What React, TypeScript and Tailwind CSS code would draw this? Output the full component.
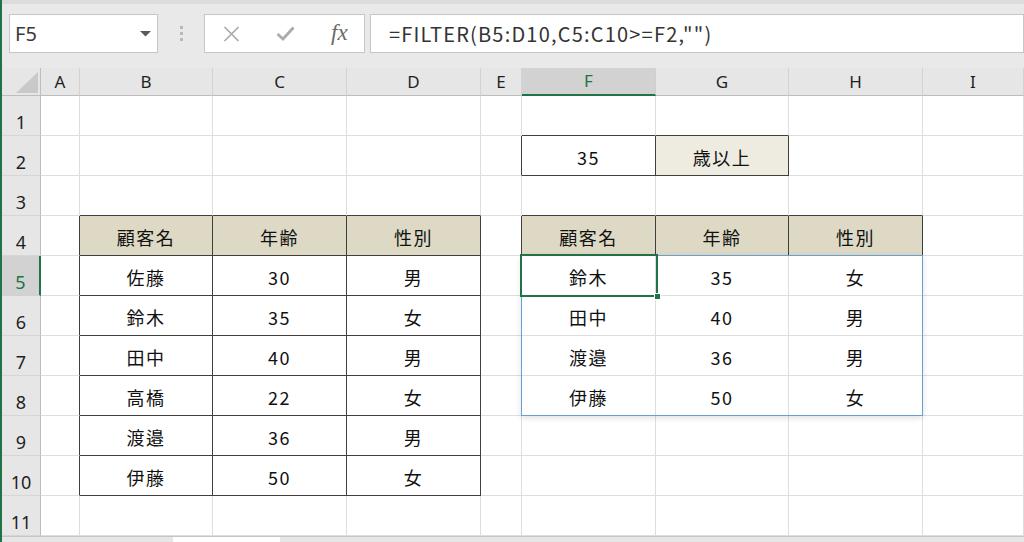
import React from 'react';

const COLS = ['A', 'B', 'C', 'D', 'E', 'F', 'G', 'H', 'I'];
const ROWS = [1, 2, 3, 4, 5, 6, 7, 8, 9, 10, 11];

const HEAD = 'bg-[#ddd9c4]';
const SOFT = 'bg-[#eeece1]';

type Cell = { text: string; fill?: string };

const CELLS: Record<string, Cell> = {
  F2: { text: '35' },
  G2: { text: '歳以上', fill: SOFT },
  B4: { text: '顧客名', fill: HEAD },
  C4: { text: '年齢', fill: HEAD },
  D4: { text: '性別', fill: HEAD },
  F4: { text: '顧客名', fill: HEAD },
  G4: { text: '年齢', fill: HEAD },
  H4: { text: '性別', fill: HEAD },
};

const SOURCE = [
  ['佐藤', '30', '男'],
  ['鈴木', '35', '女'],
  ['田中', '40', '男'],
  ['高橋', '22', '女'],
  ['渡邉', '36', '男'],
  ['伊藤', '50', '女'],
];
SOURCE.forEach((r, i) => {
  CELLS[`B${i + 5}`] = { text: r[0] };
  CELLS[`C${i + 5}`] = { text: r[1] };
  CELLS[`D${i + 5}`] = { text: r[2] };
});
SOURCE.filter((r) => Number(r[1]) >= 35).forEach((r, i) => {
  CELLS[`F${i + 5}`] = { text: r[0] };
  CELLS[`G${i + 5}`] = { text: r[1] };
  CELLS[`H${i + 5}`] = { text: r[2] };
});

// ranges with thin dark borders: B4:D10, F2:G2, F4:H4
function boxed(r: number, c: number) {
  if (r >= 4 && r <= 10 && c >= 1 && c <= 3) return true;
  if (r === 2 && (c === 5 || c === 6)) return true;
  if (r === 4 && c >= 5 && c <= 7) return true;
  return false;
}

const CELL_FONT = "font-['Noto_Sans_CJK_JP','Noto_Sans',sans-serif]";
const UI_FONT = "font-['Noto_Sans','Liberation_Sans',sans-serif]";

function Toolbar() {
  return (
    <div className="h-[68px] bg-[#e9e9e9] border-t-4 border-[#dcdcdc] flex items-start pt-[10px] pl-[7px]">
      <div className="w-[149px] h-[39px] bg-white border border-[#c6c6c6] flex items-center justify-between pl-[5px] pr-[6px]">
        <span className={`${UI_FONT} text-[20px] text-[#3a3a3a]`}>F5</span>
        <svg width="11" height="6" viewBox="0 0 11 6">
          <path d="M0 0 H11 L5.5 5.5 Z" fill="#5a5a5a" />
        </svg>
      </div>
      <div className="w-[46px] h-[39px] flex flex-col items-center justify-center gap-[3px]">
        <span className="w-[3px] h-[3px] bg-[#b9b9b9]" />
        <span className="w-[3px] h-[3px] bg-[#b9b9b9]" />
        <span className="w-[3px] h-[3px] bg-[#b9b9b9]" />
      </div>
      <div className="w-[161px] h-[39px] bg-white border border-[#c6c6c6] flex items-center pl-[18px] gap-[36px]">
        <svg width="17" height="16" viewBox="0 0 17 16">
          <path d="M1.5 1 L15.5 15 M15.5 1 L1.5 15" stroke="#ababab" strokeWidth="1.7" />
        </svg>
        <svg width="19" height="15" viewBox="0 0 19 15">
          <path d="M1.5 8 L7 13 L17.5 1.5" stroke="#ababab" strokeWidth="2.8" fill="none" />
        </svg>
        <span className="font-['Liberation_Serif',serif] italic text-[23px] text-[#6a6a6a] leading-none -mt-[3px]">
          fx
        </span>
      </div>
      <div className="flex-1 h-[39px] bg-white border border-[#c6c6c6] ml-[5px] flex items-center pl-[18px]">
        <span className={`${CELL_FONT} text-[20px] text-[#333] tracking-[1.2px]`}>
          =FILTER(B5:D10,C5:C10&gt;=F2,"")
        </span>
      </div>
    </div>
  );
}

function Sheet() {
  return (
    <div className="relative grid grid-cols-[39px_39px_133px_134px_134px_41px_134px_133px_134px_1fr] grid-rows-[28px_repeat(11,40px)] bg-white">
      {/* corner */}
      <div className="bg-[#e6e6e6] border-r border-b border-[#bdbdbd] flex items-end justify-end pr-[2px] pb-[2px]">
        <svg width="22" height="21" viewBox="0 0 22 21">
          <path d="M22 0 V21 H0 Z" fill="#c9c9c9" />
        </svg>
      </div>
      {COLS.map((c) =>
        c === 'F' ? (
          <div
            key={c}
            className={`${UI_FONT} bg-[#d2d2d2] text-[#217346] text-[17px] border-r border-r-[#cfcfcf] border-b-2 border-b-[#217346] flex items-center justify-center`}
          >
            {c}
          </div>
        ) : (
          <div
            key={c}
            className={`${UI_FONT} bg-[#e6e6e6] text-[#1f1f1f] text-[17px] border-r border-r-[#d2d2d2] border-b border-b-[#bdbdbd] flex items-center justify-center`}
          >
            {c}
          </div>
        )
      )}
      {ROWS.map((r) => (
        <React.Fragment key={r}>
          {r === 5 ? (
            <div
              className={`${UI_FONT} bg-[#d2d2d2] text-[#217346] text-[18px] border-r-2 border-r-[#217346] border-b border-b-[#d0d0d0] flex items-center justify-center pt-[14px]`}
            >
              {r}
            </div>
          ) : (
            <div
              className={`${UI_FONT} bg-[#e6e6e6] text-[#1f1f1f] text-[18px] border-r border-r-[#bdbdbd] border-b border-b-[#d6d6d6] flex items-center justify-center pt-[14px]`}
            >
              {r}
            </div>
          )}
          {COLS.map((c, ci) => {
            const cell = CELLS[`${c}${r}`];
            const darkR = boxed(r, ci) || boxed(r, ci + 1);
            const darkB = boxed(r, ci) || boxed(r + 1, ci);
            return (
              <div
                key={c}
                className={[
                  'border-r border-b flex items-center justify-center pt-[4px] text-[#111] text-[18px] tracking-[1.5px]',
                  CELL_FONT,
                  darkR ? 'border-r-[#3f3f3f]' : 'border-r-[#dedede]',
                  darkB ? 'border-b-[#3f3f3f]' : 'border-b-[#dedede]',
                  cell?.fill ?? '',
                ].join(' ')}
              >
                {cell?.text}
              </div>
            );
          })}
        </React.Fragment>
      ))}

      {/* spill range outline F5:H8 */}
      <div className="absolute left-[519px] top-[187px] w-[402px] h-[161px] border border-[#6a9fd6] shadow-[0_2px_6px_rgba(0,0,0,0.12)] pointer-events-none" />
      {/* active cell F5 */}
      <div className="absolute left-[518px] top-[186px] w-[138px] h-[43px] border-2 border-[#217346] pointer-events-none">
        <div className="absolute -right-[5px] -bottom-[5px] w-[7px] h-[7px] bg-[#217346] border border-white" />
      </div>
    </div>
  );
}

export default function App() {
  return (
    <div className="w-[1024px] h-[542px] overflow-hidden border-l-2 border-[#217346] flex flex-col bg-[#e9e9e9]">
      <Toolbar />
      <Sheet />
      <div className="flex-1 bg-[#e6e6e6] border-t border-[#c6c6c6] flex">
        <div className="ml-[171px] w-[107px] bg-white" />
      </div>
    </div>
  );
}
